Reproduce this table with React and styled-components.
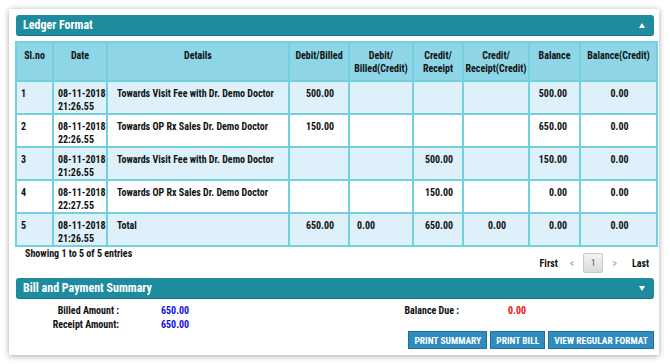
import React from "react";
import styled, { createGlobalStyle } from "styled-components";

const GlobalStyle = createGlobalStyle`
  body {
    margin: 0;
    background: #ffffff;
    font-family: "Roboto Condensed", "DejaVu Sans Condensed", sans-serif;
    font-stretch: condensed;
    color: #111;
  }
`;

const rows = [
  { no: "1", date: "08-11-2018", time: "21:26.55", details: "Towards Visit Fee with Dr. Demo Doctor", debit: "500.00", debitCr: "", credit: "", creditCr: "", balance: "500.00", balanceCr: "0.00" },
  { no: "2", date: "08-11-2018", time: "22:26.55", details: "Towards OP Rx Sales Dr. Demo Doctor", debit: "150.00", debitCr: "", credit: "", creditCr: "", balance: "650.00", balanceCr: "0.00" },
  { no: "3", date: "08-11-2018", time: "21:26.55", details: "Towards Visit Fee with Dr. Demo Doctor", debit: "", debitCr: "", credit: "500.00", creditCr: "", balance: "150.00", balanceCr: "0.00" },
  { no: "4", date: "08-11-2018", time: "22:27.55", details: "Towards OP Rx Sales Dr. Demo Doctor", debit: "", debitCr: "", credit: "150.00", creditCr: "", balance: "0.00", balanceCr: "0.00" },
  { no: "5", date: "08-11-2018", time: "21:26.55", details: "Total", debit: "650.00", debitCr: "0.00", credit: "650.00", creditCr: "0.00", balance: "0.00", balanceCr: "0.00" },
];

const columns = [
  { title: "Sl.no", width: 37 },
  { title: "Date", width: 54 },
  { title: "Details", width: 182 },
  { title: "Debit/Billed", width: 60 },
  { title: "Debit/ Billed(Credit)", width: 64 },
  { title: "Credit/ Receipt", width: 50 },
  { title: "Credit/ Receipt(Credit)", width: 66 },
  { title: "Balance", width: 51 },
  { title: "Balance(Credit)", width: 77 },
];

const App = () => {
  return (
    <>
      <GlobalStyle />
      <Page>
        <Card>
          <PanelBar>
            <span>Ledger Format</span>
            <Caret up />
          </PanelBar>

          <Table>
            <colgroup>
              {columns.map((c) => (
                <col key={c.title} style={{ width: c.width }} />
              ))}
            </colgroup>
            <thead>
              <tr>
                {columns.map((c) => (
                  <Th key={c.title}>{c.title}</Th>
                ))}
              </tr>
            </thead>
            <tbody>
              {rows.map((r, i) => (
                <Tr key={r.no} striped={i % 2 === 0}>
                  <Td>{r.no}</Td>
                  <Td nowrap>
                    {r.date}
                    <br />
                    {r.time}
                  </Td>
                  <Td pad="5px 2px 0 9px">{r.details}</Td>
                  <Td align="center">{r.debit}</Td>
                  <Td pad="5px 2px 0 7px">{r.debitCr}</Td>
                  <Td align="center">{r.credit}</Td>
                  <Td align="center">{r.creditCr}</Td>
                  <Td align="right" pad="5px 12px 0 2px">{r.balance}</Td>
                  <Td align="center">{r.balanceCr}</Td>
                </Tr>
              ))}
            </tbody>
          </Table>

          <TableFooter>
            <Info>Showing 1 to 5 of 5 entries</Info>
            <Pager>
              <PageLink>First</PageLink>
              <PageArrow>&lt;</PageArrow>
              <PageBox>1</PageBox>
              <PageArrow wide>&gt;</PageArrow>
              <PageLink>Last</PageLink>
            </Pager>
          </TableFooter>

          <PanelBar>
            <span>Bill and Payment Summary</span>
            <Caret />
          </PanelBar>

          <Summary>
            <Label>Billed Amount :</Label>
            <Amount color="#1010e8">650.00</Amount>
            <Label>Balance Due :</Label>
            <Amount color="#f01010" offset={49}>0.00</Amount>
            <Label>Receipt Amount:</Label>
            <Amount color="#1010e8">650.00</Amount>
          </Summary>

          <Actions>
            <ActionButton>PRINT SUMMARY</ActionButton>
            <ActionButton>PRINT BILL</ActionButton>
            <ActionButton>VIEW REGULAR FORMAT</ActionButton>
          </Actions>
        </Card>
      </Page>
    </>
  );
};

const Page = styled.div`
  padding: 9px 11px 9px 9px;
`;

const Card = styled.div`
  background: #fff;
  box-shadow: 0 1px 6px rgba(0, 0, 0, 0.35);
  padding: 6px 3px 6px 6px;
  display: flex;
  flex-direction: column;
`;

const PanelBar = styled.div`
  height: 21px;
  margin: 0 2px 0 1px;
  background: #1f8b9f;
  border-radius: 3px;
  border-bottom: 1px solid #187586;
  box-sizing: border-box;
  display: flex;
  align-items: center;
  justify-content: space-between;
  padding: 0 9px 0 7px;
  color: #fff;
  font-weight: bold;
  font-size: 12px;
`;

const Caret = styled.span`
  width: 0;
  height: 0;
  border-left: 3.5px solid transparent;
  border-right: 3.5px solid transparent;
  ${(p) =>
    p.up
      ? "border-bottom: 5px solid #fff;"
      : "border-top: 5px solid #fff;"}
`;

const Table = styled.table`
  margin-top: 5px;
  width: 641px;
  border-collapse: collapse;
  table-layout: fixed;
  font-size: 10px;
  font-weight: bold;
  border: 2px solid #72d0df;
`;

const Th = styled.th`
  height: 39px;
  box-sizing: border-box;
  vertical-align: top;
  padding: 6px 1px 0;
  background: #8ed6e7;
  border: 2px solid #72d0df;
  line-height: 13px;
  font-weight: bold;
  text-align: center;
`;

const Tr = styled.tr`
  height: 33px;
  background: ${(p) => (p.striped ? "#def1fa" : "#ffffff")};
`;

const Td = styled.td`
  vertical-align: top;
  padding: ${(p) => p.pad || "5px 2px 0 4px"};
  border: 2px solid #72d0df;
  line-height: 13px;
  white-space: ${(p) => (p.nowrap ? "nowrap" : "normal")};
  text-align: ${(p) => p.align || "left"};
`;

const TableFooter = styled.div`
  height: 31px;
  display: flex;
  justify-content: space-between;
  align-items: flex-start;
  padding: 0 4px 0 10px;
`;

const Info = styled.div`
  font-size: 10px;
  line-height: 12px;
  font-weight: bold;
  margin-top: 1px;
`;

const Pager = styled.div`
  display: flex;
  align-items: center;
  margin-top: 6px;
  font-size: 10px;
  font-weight: bold;
`;

const PageLink = styled.span`
  padding: 0 3px;
`;

const PageArrow = styled.span`
  color: #999;
  font-weight: normal;
  padding: ${(p) => (p.wide ? "0 12px 0 9px" : "0 9px")};
`;

const PageBox = styled.span`
  width: 20px;
  height: 20px;
  box-sizing: border-box;
  display: flex;
  align-items: center;
  justify-content: center;
  border: 1px solid #c8c8c8;
  border-radius: 2px;
  background: linear-gradient(#f4f4f4, #d9d9d9);
  color: #555;
  font-weight: normal;
  font-size: 9px;
`;

const Summary = styled.div`
  display: grid;
  grid-template-columns: 104px 236px 104px 1fr;
  grid-auto-rows: 14px;
  padding-top: 4px;
  font-size: 10px;
  font-weight: bold;
  align-items: center;
`;

const Label = styled.div`
  text-align: right;
  white-space: nowrap;
`;

const Amount = styled.div`
  color: ${(p) => p.color};
  padding-left: ${(p) => (p.offset || 42)}px;
`;

const Actions = styled.div`
  display: flex;
  justify-content: flex-end;
  gap: 3px;
  padding-right: 2px;
`;

const ActionButton = styled.button`
  height: 18px;
  padding: 0 5px;
  background: #2f8cbf;
  border: 1px solid #21709c;
  color: #fff;
  font-family: inherit;
  font-weight: bold;
  font-size: 9.5px;
  cursor: pointer;
`;

export default App;
